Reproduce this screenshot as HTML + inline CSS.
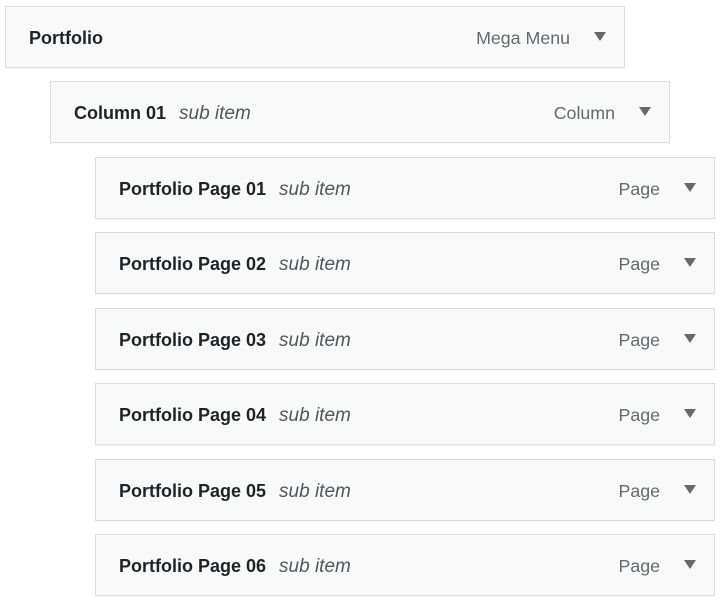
<html><head><style>
body{margin:0;width:726px;height:604px;background:#fff;font-family:"Liberation Sans",sans-serif;position:relative;overflow:hidden}
.it{position:absolute;height:60px;width:618px;border:1px solid #dcdcde;background:#f9f9f9;box-shadow:0 1px 1px rgba(0,0,0,.04)}
.t{position:absolute;left:23px;top:21px;font-size:18px;font-weight:bold;color:#1d2327;white-space:nowrap}
.t i{font-weight:normal;font-size:19px;color:#50575e;margin-left:13px}
.ty{position:absolute;right:54px;top:21px;font-size:17.8px;color:#646970}
.ar{position:absolute;right:18px;top:25px;width:0;height:0;border-left:6px solid transparent;border-right:6px solid transparent;border-top:9px solid #646970}
</style></head><body>
<div class="it" style="left:5px;top:6px"><div class="t">Portfolio</div><div class="ty">Mega Menu</div><div class="ar"></div></div>
<div class="it" style="left:50px;top:81px"><div class="t">Column 01<i>sub item</i></div><div class="ty">Column</div><div class="ar"></div></div>
<div class="it" style="left:95px;top:157px"><div class="t">Portfolio Page 01<i>sub item</i></div><div class="ty">Page</div><div class="ar"></div></div>
<div class="it" style="left:95px;top:232px"><div class="t">Portfolio Page 02<i>sub item</i></div><div class="ty">Page</div><div class="ar"></div></div>
<div class="it" style="left:95px;top:308px"><div class="t">Portfolio Page 03<i>sub item</i></div><div class="ty">Page</div><div class="ar"></div></div>
<div class="it" style="left:95px;top:383px"><div class="t">Portfolio Page 04<i>sub item</i></div><div class="ty">Page</div><div class="ar"></div></div>
<div class="it" style="left:95px;top:459px"><div class="t">Portfolio Page 05<i>sub item</i></div><div class="ty">Page</div><div class="ar"></div></div>
<div class="it" style="left:95px;top:534px"><div class="t">Portfolio Page 06<i>sub item</i></div><div class="ty">Page</div><div class="ar"></div></div>
</body></html>
